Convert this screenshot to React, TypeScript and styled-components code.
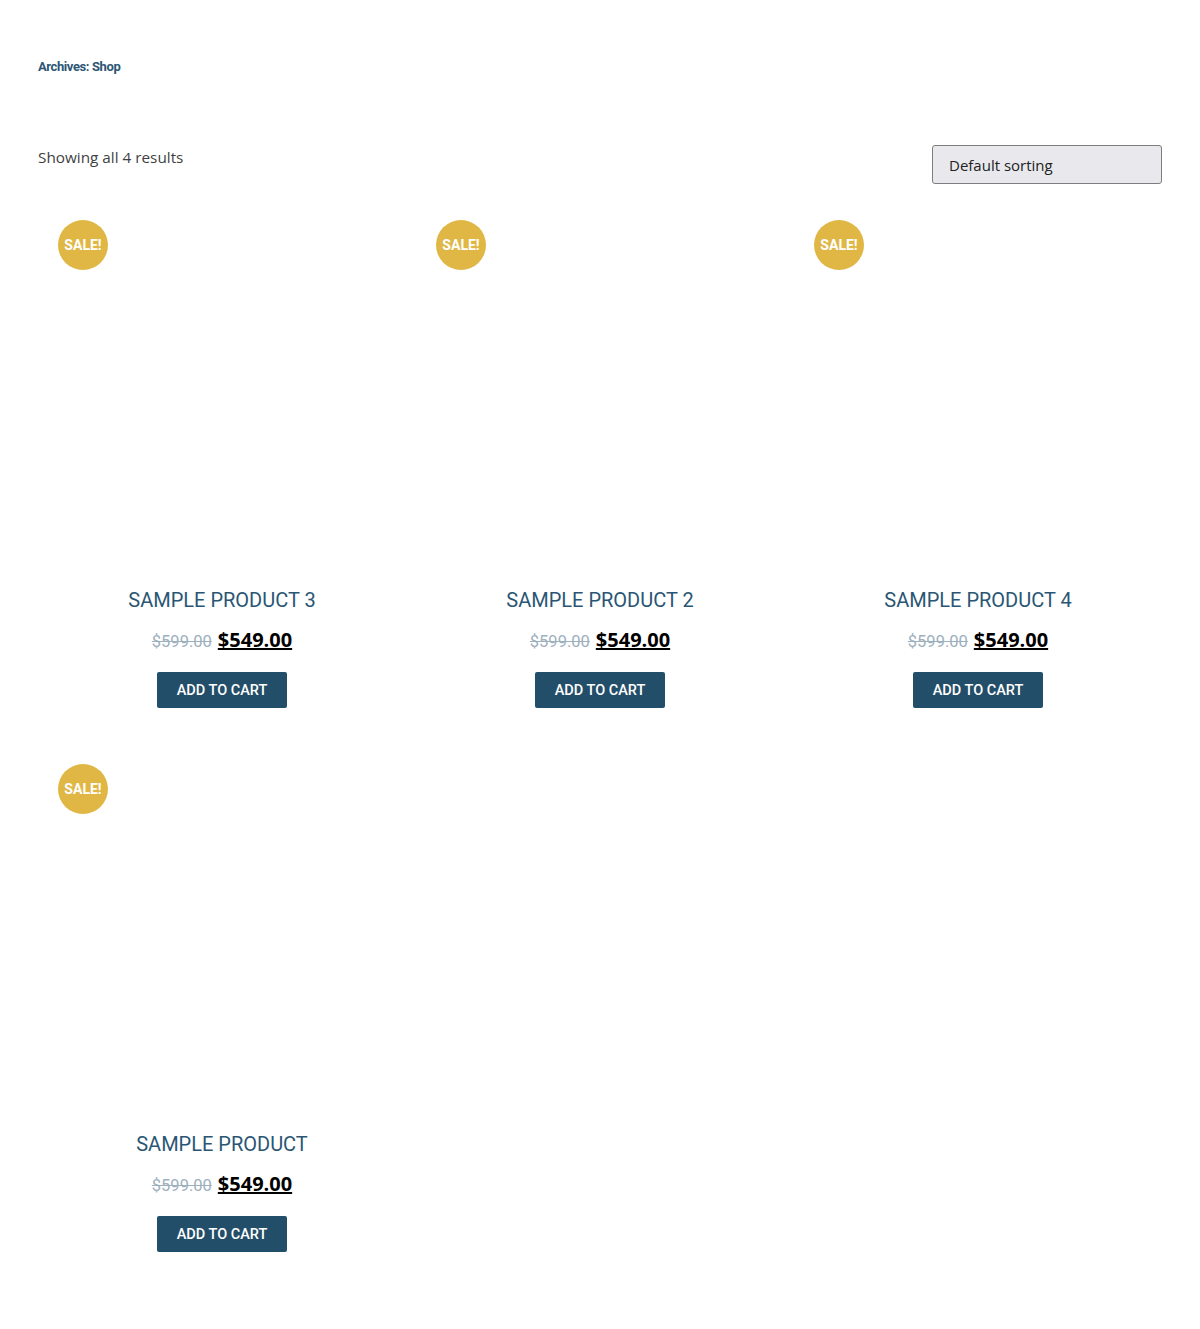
import React from "react";
import styled, { createGlobalStyle } from "styled-components";

const GlobalStyle = createGlobalStyle`
  html, body {
    margin: 0;
    padding: 0;
    background: #fff;
  }
  body {
    font-family: "Open Sans", "Noto Sans", sans-serif;
  }
`;

const products = [
  { name: "Sample Product 3" },
  { name: "Sample Product 2" },
  { name: "Sample Product 4" },
  { name: "Sample Product" },
];

function App() {
  return (
    <Page>
      <GlobalStyle />
      <Heading>Archives: Shop</Heading>
      <Toolbar>
        <ResultCount>Showing all 4 results</ResultCount>
        <SortSelect>
          <option>Default sorting</option>
        </SortSelect>
      </Toolbar>
      <Grid>
        {products.map((p) => (
          <Card key={p.name}>
            <ImageBox>
              <SaleBadge>SALE!</SaleBadge>
            </ImageBox>
            <Title>{p.name}</Title>
            <Price>
              <OldPrice>$599.00</OldPrice>
              <NewPrice>$549.00</NewPrice>
            </Price>
            <CartButton>ADD TO CART</CartButton>
          </Card>
        ))}
      </Grid>
    </Page>
  );
}

const Page = styled.div`
  padding: 58px 38px 40px;
  min-height: 1329px;
  box-sizing: border-box;
`;

const Heading = styled.h1`
  margin: 0;
  font-family: Roboto, "Liberation Sans", sans-serif;
  font-weight: 700;
  font-size: 13px;
  letter-spacing: -0.4px;
  line-height: 18px;
  color: #2c5674;
`;

const Toolbar = styled.div`
  display: flex;
  justify-content: space-between;
  align-items: flex-start;
  margin-top: 69px;
`;

const ResultCount = styled.p`
  margin: 0;
  font-family: "Open Sans", "Noto Sans", sans-serif;
  font-size: 15.3px;
  line-height: 24px;
  color: #3f3f3f;
`;

const SortSelect = styled.select`
  appearance: none;
  width: 230px;
  height: 39px;
  padding: 0 16px;
  border: 1px solid #7d7d7d;
  border-radius: 3px;
  background: #e9e9ed;
  font-family: "Open Sans", "Noto Sans", sans-serif;
  font-size: 15px;
  color: #222;
`;

const Grid = styled.div`
  display: grid;
  grid-template-columns: repeat(3, 1fr);
  column-gap: 10px;
  row-gap: 36px;
  margin-top: 16px;
`;

const Card = styled.div`
  display: flex;
  flex-direction: column;
  align-items: center;
`;

const ImageBox = styled.div`
  position: relative;
  width: 100%;
  height: 368px;
`;

const SaleBadge = styled.span`
  position: absolute;
  top: 20px;
  left: 20px;
  width: 50px;
  height: 50px;
  border-radius: 50%;
  background: #e0b745;
  color: #fff;
  display: flex;
  align-items: center;
  justify-content: center;
  font-family: Roboto, "Liberation Sans", sans-serif;
  font-weight: 700;
  font-size: 14px;
`;

const Title = styled.h2`
  margin: 20px 0 0;
  font-family: Roboto, "Liberation Sans", sans-serif;
  font-weight: 400;
  font-size: 20px;
  line-height: 24px;
  text-transform: uppercase;
  color: #2a5674;
`;

const Price = styled.div`
  display: flex;
  align-items: baseline;
  gap: 6px;
  margin-top: 16px;
  line-height: 24px;
`;

const OldPrice = styled.del`
  font-family: Roboto, "Liberation Sans", sans-serif;
  font-size: 16.5px;
  color: #9db0bd;
`;

const NewPrice = styled.ins`
  font-family: "Open Sans", "Noto Sans", sans-serif;
  font-weight: 700;
  font-size: 20px;
  color: #000;
  text-decoration: underline;
`;

const CartButton = styled.button`
  margin-top: 18px;
  width: 130px;
  height: 36px;
  border: none;
  border-radius: 2px;
  background: #234e69;
  color: #fff;
  font-family: Roboto, "Liberation Sans", sans-serif;
  font-weight: 500;
  font-size: 14.5px;
  cursor: pointer;
`;

export default App;
